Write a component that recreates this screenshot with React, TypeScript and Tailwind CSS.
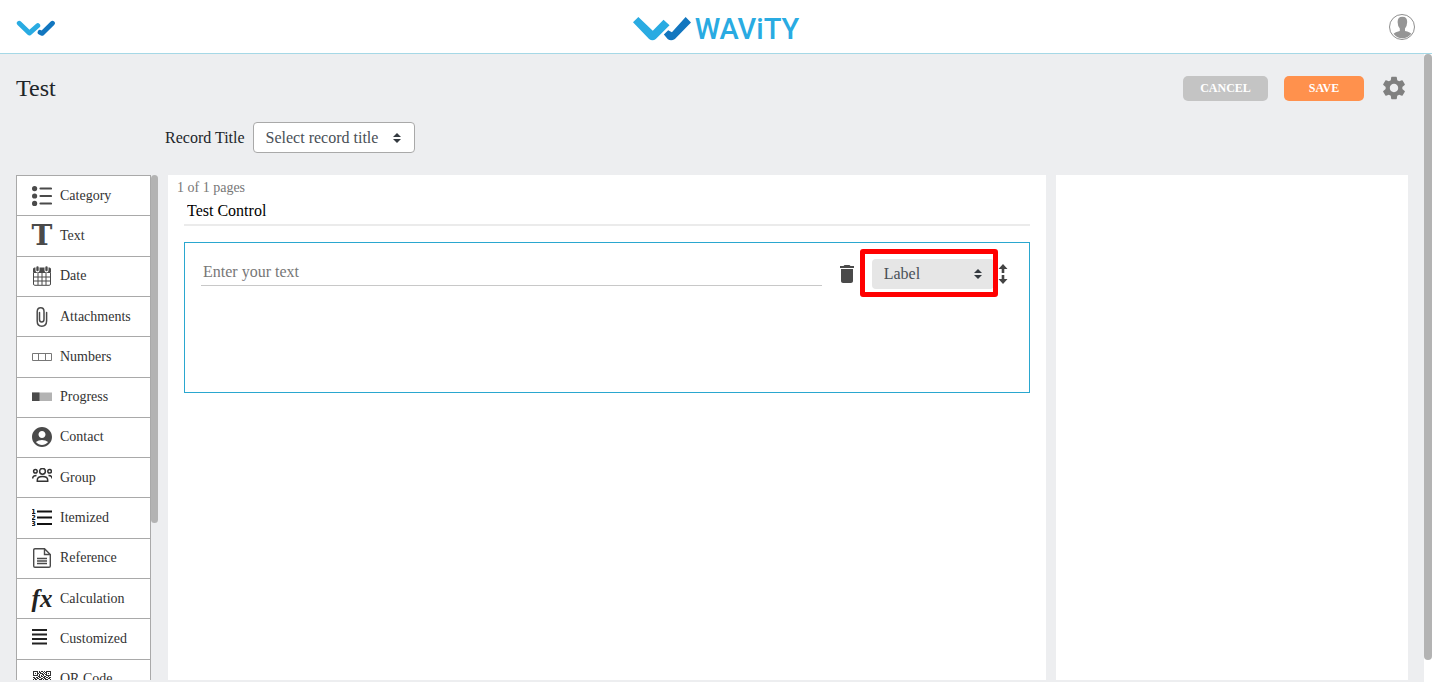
import type { ReactNode } from "react";
import { MdAccountCircle, MdDelete, MdSettings } from "react-icons/md";

function Mark({ className }: { className: string }) {
  return (
    <svg viewBox="46 51 173 71" className={className} aria-hidden="true">
      <path d="M46 66 62 51 105 92 137 59 155 75 114 116Q104 124 94 116Z" fill="#29abe2" />
      <path d="M138 103 151 90 162 96 203 51 219 67 171 116Q160 124 150 117Z" fill="#1276bf" />
    </svg>
  );
}

function SmallMark({ className }: { className: string }) {
  return (
    <svg
      viewBox="44 62 123 50"
      className={className}
      fill="none"
      strokeWidth="15"
      strokeLinecap="round"
      strokeLinejoin="round"
      aria-hidden="true"
    >
      <path d="M54 71 85 101 111 78" stroke="#29abe2" />
      <path d="M118 99 124 102 156 71" stroke="#1276bf" />
    </svg>
  );
}

function Carets({ className }: { className: string }) {
  return (
    <svg viewBox="0 0 8 10" className={className} aria-hidden="true">
      <path d="M4 0 8 4H0ZM4 10 0 6H8Z" fill="#343a40" />
    </svg>
  );
}

function Icon({ children }: { children: ReactNode }) {
  return (
    <svg viewBox="0 0 20 20" className="size-5" fill="none" stroke="#4a4a4a" aria-hidden="true">
      {children}
    </svg>
  );
}

const qrRows = [
  "111110101101011111",
  "100010110010110001",
  "101011011101010101",
  "100010100110110001",
  "111110101010011111",
  "000001101101100100",
  "110110110011011011",
  "011011001101100110",
  "101100111010111001",
  "010111010111001101",
  "110010101100110110",
  "001101110011101011",
  "111110010110010100",
  "100010111001101101",
  "101010100110110010",
  "100010110101011101",
  "111110101011101011",
];

const controls: { name: string; icon: ReactNode }[] = [
  {
    name: "Category",
    icon: (
      <Icon>
        <g fill="#4a4a4a" stroke="none">
          <circle cx="2.600" cy="2.600" r="2.600" />
          <circle cx="2.600" cy="10" r="2.600" />
          <circle cx="2.600" cy="17.400" r="2.600" />
        </g>
        <path d="M8.500 2.500H19M8.500 10H19M8.500 17.500H19" strokeWidth="2.200" strokeLinecap="round" />
      </Icon>
    ),
  },
  {
    name: "Text",
    icon: <span className="font-['DejaVu_Serif',serif] text-[28px] leading-5 font-bold text-[#4a4a4a]">T</span>,
  },
  {
    name: "Date",
    icon: (
      <Icon>
        <path d="M2.500 2H17.500Q18.500 2 18.500 3V6.500H1.500V3Q1.500 2 2.500 2Z" fill="#4a4a4a" />
        <path d="M1.500 7V18Q1.500 19.300 2.800 19.300H17.200Q18.500 19.300 18.500 18V7M1.500 11H18.500M1.500 15H18.500M6 7V19M10 7V19M14 7V19" />
        <path d="M5.500 1.500V4.500M14.500 1.500V4.500" strokeWidth="4" stroke="#fff" strokeLinecap="round" />
        <path d="M5.500 1.500V4M14.500 1.500V4" strokeWidth="2.400" strokeLinecap="round" />
      </Icon>
    ),
  },
  {
    name: "Attachments",
    icon: (
      <Icon>
        <path
          d="M12.500 5.500V12.500Q12.500 15 10.300 15T8 12.500V4.500Q8 .8 11.300 .8T14.800 4.500V14Q14.800 19.200 10.200 19.200T5.400 14V5.500"
          strokeWidth="1.500"
          strokeLinecap="round"
          transform="matrix(-1 0 0 1 20 0)"
        />
      </Icon>
    ),
  },
  {
    name: "Numbers",
    icon: (
      <Icon>
        <path d="M.5 6.500H19.500V13.500H.5ZM6.500 6.500V13.500M13.500 6.500V13.500" stroke="#777" />
      </Icon>
    ),
  },
  {
    name: "Progress",
    icon: (
      <Icon>
        <path d="M0 5.500H20V14H0Z" fill="#b3b3b3" stroke="none" />
        <path d="M0 5.500H7.500V14H0Z" fill="#4a4a4a" stroke="none" />
      </Icon>
    ),
  },
  {
    name: "Contact",
    icon: <MdAccountCircle className="size-6 shrink-0 text-[#4a4a4a]" />,
  },
  {
    name: "Group",
    icon: (
      <Icon>
        <g stroke="#333" strokeWidth="1.500">
          <circle cx="10.500" cy="3.300" r="2.900" />
          <circle cx="3.400" cy="3.300" r="1.800" />
          <circle cx="17.600" cy="3.300" r="1.800" />
          <path d="M5.300 13.300V12Q5.300 8.500 10.500 8.500T15.700 12V13.300ZM.7 10.500Q.7 7.500 4.500 7.500M20 10.500Q20 7.500 16.500 7.500" />
        </g>
      </Icon>
    ),
  },
  {
    name: "Itemized",
    icon: (
      <Icon>
        <path d="M5 3.500H20M5 9.500H20M5 16H20" stroke="#111" strokeWidth="2" />
        <g fill="#111" stroke="none" className="font-['DejaVu_Sans',sans-serif] text-[7px] font-bold">
          <text x="-1" y="6">1</text>
          <text x="-1" y="12">2</text>
          <text x="-1" y="18">3</text>
        </g>
      </Icon>
    ),
  },
  {
    name: "Reference",
    icon: (
      <Icon>
        <path d="M3 .7H12.500L18.300 6.500V18Q18.300 19.300 17 19.300H3Q1.700 19.300 1.700 18V2Q1.700.7 3 .7ZM12.500.7V6.500H18.300" strokeWidth="1.400" />
        <path d="M5 10.500H15M5 13H15M5 15.500H15" strokeWidth="1.300" />
      </Icon>
    ),
  },
  {
    name: "Calculation",
    icon: <span className="font-['Liberation_Serif',serif] text-[25px] leading-5 font-bold text-[#222] italic">fx</span>,
  },
  {
    name: "Customized",
    icon: (
      <Icon>
        <path d="M0 1H15M0 5.500H15M0 10H15M0 14.500H15" stroke="#222" strokeWidth="1.900" />
      </Icon>
    ),
  },
  {
    name: "QR Code",
    icon: (
      <Icon>
        <g fill="#333" stroke="none">
          {qrRows.flatMap((row, y) =>
            [...row].map((cell, x) =>
              cell === "1" ? <rect key={`${x}-${y}`} x={x + 1} y={y + 2} width="1" height="1" /> : null,
            ),
          )}
        </g>
      </Icon>
    ),
  },
];

function Header() {
  return (
    <header className="grid h-[54px] shrink-0 grid-cols-3 items-center border-b border-[#a5d8e6] bg-white px-4">
      <a href="#home" aria-label="Home" className="justify-self-start pt-1">
        <SmallMark className="h-[17px] w-10" />
      </a>
      <a href="#wavity" className="flex items-center gap-1 justify-self-center pt-1 text-[#29abe2]">
        <Mark className="h-6 w-[58px]" />
        <span className="font-[Roboto,sans-serif] text-[29px] leading-6 font-medium">WAViTY</span>
      </a>
      <button type="button" aria-label="Account" className="justify-self-end">
        <svg viewBox="0 0 28 28" className="size-7" aria-hidden="true">
          <circle cx="14" cy="14" r="12.500" fill="#fff" stroke="#8f8f8f" />
          <path
            d="M14.300 3.700Q19.300 3.700 19.200 9 19 13.500 17 15.500V18Q22 19 23.300 20.800 19.500 25.300 14.300 25.300T5.500 20.800Q7 19 11.800 18V15.500Q9.700 13.500 9.600 9 9.600 3.700 14.300 3.700Z"
            fill="#959595"
          />
        </svg>
      </button>
    </header>
  );
}

function Palette() {
  return (
    <aside className="flex min-h-0 overflow-hidden">
      <ul className="grid h-[526px] min-w-0 flex-1 auto-rows-fr border border-[#a9a9a9] bg-white">
        {controls.map(({ name, icon }) => (
          <li key={name} className="border-b border-[#a9a9a9]">
            <button type="button" className="flex h-full w-full items-center gap-2 pl-[15px] text-sm text-[#333]">
              <span className="flex h-5 w-5 shrink-0 items-center justify-center">{icon}</span>
              {name}
            </button>
          </li>
        ))}
      </ul>
      <div className="h-[69%] w-[7px] shrink-0 rounded-full bg-[#b3b3b3]" />
    </aside>
  );
}

function Canvas() {
  return (
    <section className="min-w-0 bg-white px-4 pt-1">
      <p className="-mx-[7px] text-sm leading-[18px] text-[#777]">1 of 1 pages</p>
      <input
        aria-label="Page title"
        defaultValue="Test Control"
        className="block h-[29px] w-full border-b-2 border-[#ebebeb] bg-transparent px-[3px] text-base text-black outline-none"
      />
      <div className="mt-4 flex h-[151px] items-start gap-4 border border-[#2aa7cf] pt-4 pr-[21px] pl-4">
        <input
          aria-label="Label text"
          placeholder="Enter your text"
          className="h-[27px] min-w-0 flex-1 border-b border-[#c8c8c8] bg-transparent px-[2px] text-base outline-none placeholder:text-[#777]"
        />
        <button type="button" aria-label="Delete" className="flex h-[30px] w-[18px] items-center justify-center">
          <MdDelete className="size-6 shrink-0 text-[#4a4a4a]" />
        </button>
        <div className="relative flex items-center">
          <select
            aria-label="Control type"
            className="h-[30px] w-[122px] appearance-none rounded bg-[#e6e6e6] px-3 text-base text-[#495057] outline-none"
          >
            <option>Label</option>
          </select>
          <Carets className="pointer-events-none absolute right-3 h-[10px] w-2" />
          <div className="pointer-events-none absolute -top-[10px] -right-1 -bottom-2 -left-3 rounded-[3px] border-[5px] border-[#ff0000]" />
        </div>
        <button type="button" aria-label="Move" className="-ml-3 flex h-[30px] items-center">
          <svg viewBox="0 0 10 20" className="h-5 w-[10px]" aria-hidden="true">
            <path d="M5 0 9.500 5H6.300V9H3.700V5H.5ZM5 20 .5 15H3.700V11H6.300V15H9.500Z" fill="#444" />
          </svg>
        </button>
      </div>
    </section>
  );
}

export default function App() {
  return (
    <div className="flex h-screen flex-col overflow-hidden bg-white font-['Liberation_Serif',serif]">
      <Header />
      <div className="flex min-h-0 flex-1">
        <main className="flex min-w-0 flex-1 flex-col bg-[#edeef0] pt-5 pr-4 pb-[2px] pl-4">
          <div className="flex h-7 items-center gap-4">
            <h1 className="flex-1 text-2xl text-[#212529]">Test</h1>
            <button type="button" className="h-[25px] w-[85px] rounded-[5px] bg-[#c4c4c4] text-xs font-bold text-white">
              CANCEL
            </button>
            <button type="button" className="h-[25px] w-20 rounded-[5px] bg-[#ff914d] text-xs font-bold text-white">
              SAVE
            </button>
            <button type="button" aria-label="Settings" className="text-[#808080]">
              <MdSettings className="size-7" />
            </button>
          </div>
          <div className="mt-5 mb-[22px] flex items-center gap-2 pl-[149px]">
            <label htmlFor="record-title" className="text-base text-[#212529]">
              Record Title
            </label>
            <div className="relative flex items-center">
              <select
                id="record-title"
                className="h-[31px] w-[162px] appearance-none rounded border border-[#a9a9a9] bg-white px-3 text-base text-[#495057] outline-none"
              >
                <option>Select record title</option>
              </select>
              <Carets className="pointer-events-none absolute right-[14px] h-[10px] w-2" />
            </div>
          </div>
          <div className="grid min-h-0 flex-1 grid-cols-[142px_minmax(0,877fr)_minmax(0,352fr)] grid-rows-[minmax(0,1fr)] gap-[10px]">
            <Palette />
            <Canvas />
            <section aria-label="Properties" className="bg-white" />
          </div>
        </main>
        <div className="mb-[22px] w-2 shrink-0 rounded-full bg-[#b3b3b3]" />
      </div>
    </div>
  );
}
